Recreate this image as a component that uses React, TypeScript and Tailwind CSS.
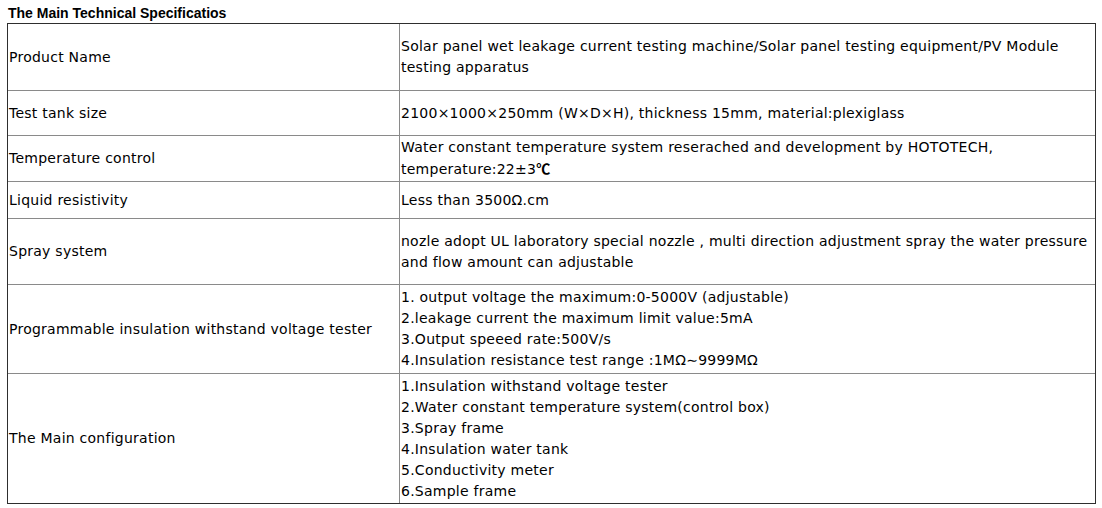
import React from "react";

type Row = { label: string; lines: React.ReactNode[]; h: string };

const rows: Row[] = [
  {
    label: "Product Name",
    lines: [
      "Solar panel wet leakage current testing machine/Solar panel testing equipment/PV Module",
      "testing apparatus",
    ],
    h: "h-[67px]",
  },
  {
    label: "Test tank size",
    lines: ["2100×1000×250mm (W×D×H), thickness 15mm, material:plexiglass"],
    h: "h-[45px]",
  },
  {
    label: "Temperature control",
    lines: [
      "Water constant temperature system reserached and development by HOTOTECH,",
      <>
        temperature:22±3
        <span
          className="font-bold"
          style={{ fontFamily: '"Noto Sans CJK SC", sans-serif' }}
        >
          ℃
        </span>
      </>,
    ],
    h: "h-[46px]",
  },
  {
    label: "Liquid resistivity",
    lines: ["Less than 3500Ω.cm"],
    h: "h-[37px]",
  },
  {
    label: "Spray system",
    lines: [
      "nozle adopt UL laboratory special nozzle , multi direction adjustment spray the water pressure",
      "and flow amount can adjustable",
    ],
    h: "h-[66px]",
  },
  {
    label: "Programmable insulation withstand voltage tester",
    lines: [
      "1. output voltage the maximum:0-5000V (adjustable)",
      "2.leakage current the maximum limit value:5mA",
      "3.Output speeed rate:500V/s",
      "4.Insulation resistance test range :1MΩ∼9999MΩ",
    ],
    h: "h-[89px]",
  },
  {
    label: "The Main configuration",
    lines: [
      "1.Insulation withstand voltage tester",
      "2.Water constant temperature system(control box)",
      "3.Spray frame",
      "4.Insulation water tank",
      "5.Conductivity meter",
      "6.Sample frame",
    ],
    h: "h-[129px]",
  },
];

export default function App() {
  return (
    <div className="w-[1102px] h-[508px] bg-white text-black overflow-hidden">
      <div
        className="h-[23px] pl-[8px] pt-[5px] text-[14px] leading-[16px] font-bold"
        style={{ fontFamily: '"Liberation Sans", Arial, sans-serif' }}
      >
        The Main Technical Specificatios
      </div>
      <div
        className="ml-[7px] w-[1089px] border border-[#2e2e2e] text-[14px] leading-[21px] tracking-[0.25px] text-black"
        style={{ fontFamily: '"DejaVu Sans", Verdana, sans-serif' }}
      >
        {rows.map((r, i) => (
          <div
            key={i}
            className={`flex ${r.h} ${i < rows.length - 1 ? "border-b border-[#8a8a8a]" : ""}`}
          >
            <div className="w-[392px] shrink-0 border-r border-[#8a8a8a] pl-[1px] flex items-center whitespace-nowrap">
              {r.label}
            </div>
            <div className="flex-1 pl-[1px] flex flex-col justify-center whitespace-nowrap">
              {r.lines.map((l, j) => (
                <div key={j}>{l}</div>
              ))}
            </div>
          </div>
        ))}
      </div>
    </div>
  );
}
